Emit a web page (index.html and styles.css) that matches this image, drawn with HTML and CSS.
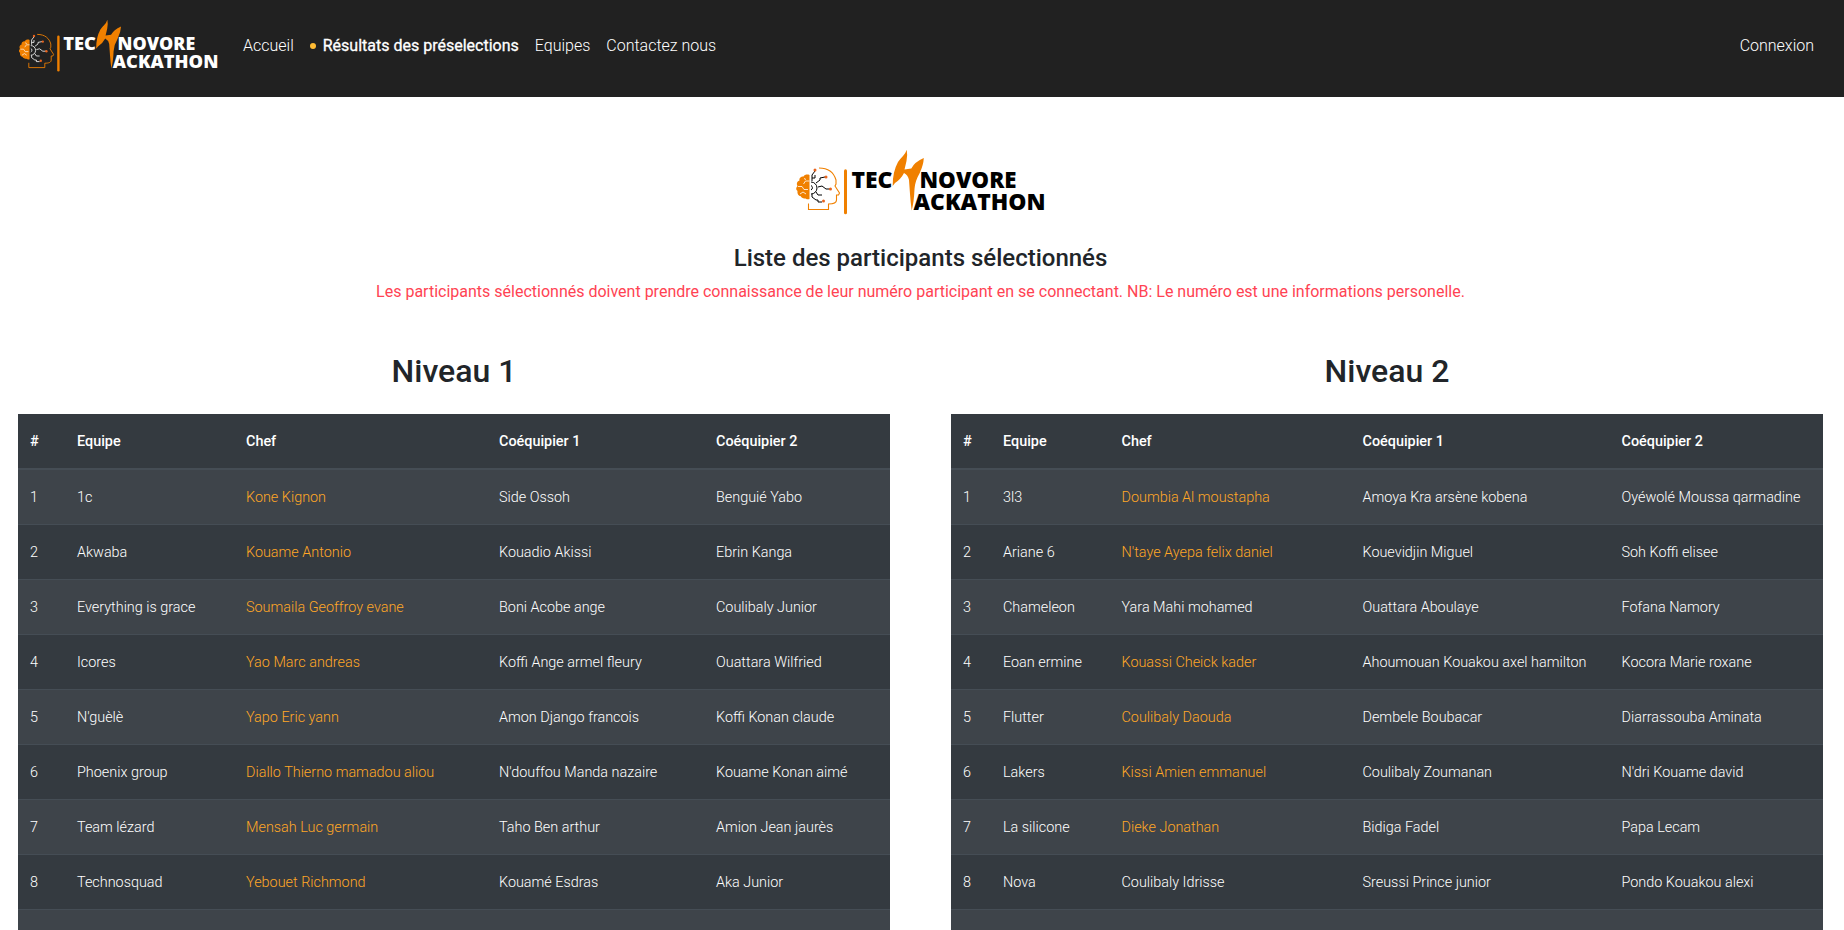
FILE: index.html
```html
<!DOCTYPE html>
<html lang="fr">
<head>
<meta charset="utf-8">
<title>Technovore Hackathon</title>
<link rel="stylesheet" href="styles.css">
</head>
<body>
<svg class="defs" width="0" height="0" aria-hidden="true">
  <symbol id="logo" viewBox="0 0 280 85" overflow="visible">
    <path class="brain" d="M29.500 35c-2-1-5-.5-6 1.500-3 0-4.500 2-4 4-3 1-3 4-2 5.500-2 2-1.500 4 0 5-.5 3 1.500 5 3 5 1 2 3 2.500 5 2.500 1.500 1 3 1 4 .5z"/>
    <path class="folds" d="M29.500 41h-4l-2 3M18 46.500h4l2 3h4M20 54l3-2 3 2M24 38.500l2 1"/>
    <path class="circuit" d="M31 42a6 6 0 0 1 0 12M31 45.500a2.500 2.500 0 0 1 0 4.500M32 41v-6l3-4M36 43l4-3v-2l5-1M38 47l4-1 4 3h4M36 52l2 3h4M32 54v3l4 3h2v2h4M32 38h3v-3"/>
    <path class="face" d="M39 28c10 0 15 5 17 12v4l-1 2 4.500 7-1 2h-2v5c0 3-3 4-8 4v5.500H28.500v-6"/>
    <circle class="node" cx="35" cy="30" r="1.500"/><circle class="node" cx="46" cy="37" r="1.500"/><circle class="node" cx="50.500" cy="49" r="1.500"/><circle class="node" cx="43.500" cy="61" r="1.500"/>
    <rect class="mark" x="64" y="29.300" width="3" height="45" rx="1.500"/>
    <text class="word" x="71.500" y="47.500" textLength="41" lengthAdjust="spacingAndGlyphs">TEC</text>
    <text class="word" x="139.500" y="47.500" textLength="97" lengthAdjust="spacingAndGlyphs">NOVORE</text>
    <text class="word" x="133.500" y="69.800" textLength="132" lengthAdjust="spacingAndGlyphs">ACKATHON</text>
    <path class="mark" d="M126.700 9.700Q127.800 15 126.500 21L124.500 29.500 131.300 28.500Q134.500 22 143.800 18Q143.500 25 139.500 33.500Q135 41 134.500 49Q134 62 131.700 70.500Q130.500 62 130 54L129 40Q128 35 124 33Q121 39 115 43L112.700 46Q112.500 32 118 22Q120.500 18.500 123 16Q125.500 13.500 126.700 9.700z"/>
  </symbol>
</svg>
<nav class="navbar">
  <svg class="nav-logo"><use href="#logo"/></svg>
  <ul class="menu">
    <li>Accueil</li><li class="active">Résultats des préselections</li><li>Equipes</li><li>Contactez nous</li>
  </ul>
  <a class="login">Connexion</a>
</nav>
<main>
  <header class="intro">
    <svg class="hero-logo"><use href="#logo"/></svg>
    <h4>Liste des participants sélectionnés</h4>
    <p>Les participants sélectionnés doivent prendre connaissance de leur numéro participant en se connectant. NB: Le numéro est une informations personelle.</p>
  </header>
  <div class="levels">
    <section>
      <h2>Niveau 1</h2>
      <table class="level-one">
        <colgroup><col class="num"><col class="team"><col class="lead"><col class="mate"><col></colgroup>
        <thead><tr><th>#</th><th>Equipe</th><th>Chef</th><th>Coéquipier 1</th><th>Coéquipier 2</th></tr></thead>
        <tbody>
          <tr><td>1</td><td>1c</td><td class="sel">Kone Kignon</td><td>Side Ossoh</td><td>Benguié Yabo</td></tr>
          <tr><td>2</td><td>Akwaba</td><td class="sel">Kouame Antonio</td><td>Kouadio Akissi</td><td>Ebrin Kanga</td></tr>
          <tr><td>3</td><td>Everything is grace</td><td class="sel">Soumaila Geoffroy evane</td><td>Boni Acobe ange</td><td>Coulibaly Junior</td></tr>
          <tr><td>4</td><td>Icores</td><td class="sel">Yao Marc andreas</td><td>Koffi Ange armel fleury</td><td>Ouattara Wilfried</td></tr>
          <tr><td>5</td><td>N'guèlè</td><td class="sel">Yapo Eric yann</td><td>Amon Django francois</td><td>Koffi Konan claude</td></tr>
          <tr><td>6</td><td>Phoenix group</td><td class="sel">Diallo Thierno mamadou aliou</td><td>N'douffou Manda nazaire</td><td>Kouame Konan aimé</td></tr>
          <tr><td>7</td><td>Team lézard</td><td class="sel">Mensah Luc germain</td><td>Taho Ben arthur</td><td>Amion Jean jaurès</td></tr>
          <tr><td>8</td><td>Technosquad</td><td class="sel">Yebouet Richmond</td><td>Kouamé Esdras</td><td>Aka Junior</td></tr>
          <tr><td></td><td></td><td></td><td></td><td></td></tr>
        </tbody>
      </table>
    </section>
    <section>
      <h2>Niveau 2</h2>
      <table class="level-two">
        <colgroup><col class="num"><col class="team"><col class="lead"><col class="mate"><col></colgroup>
        <thead><tr><th>#</th><th>Equipe</th><th>Chef</th><th>Coéquipier 1</th><th>Coéquipier 2</th></tr></thead>
        <tbody>
          <tr><td>1</td><td>3l3</td><td class="sel">Doumbia Al moustapha</td><td>Amoya Kra arsène kobena</td><td>Oyéwolé Moussa qarmadine</td></tr>
          <tr><td>2</td><td>Ariane 6</td><td class="sel">N'taye Ayepa felix daniel</td><td>Kouevidjin Miguel</td><td>Soh Koffi elisee</td></tr>
          <tr><td>3</td><td>Chameleon</td><td>Yara Mahi mohamed</td><td>Ouattara Aboulaye</td><td>Fofana Namory</td></tr>
          <tr><td>4</td><td>Eoan ermine</td><td class="sel">Kouassi Cheick kader</td><td>Ahoumouan Kouakou axel hamilton</td><td>Kocora Marie roxane</td></tr>
          <tr><td>5</td><td>Flutter</td><td class="sel">Coulibaly Daouda</td><td>Dembele Boubacar</td><td>Diarrassouba Aminata</td></tr>
          <tr><td>6</td><td>Lakers</td><td class="sel">Kissi Amien emmanuel</td><td>Coulibaly Zoumanan</td><td>N'dri Kouame david</td></tr>
          <tr><td>7</td><td>La silicone</td><td class="sel">Dieke Jonathan</td><td>Bidiga Fadel</td><td>Papa Lecam</td></tr>
          <tr><td>8</td><td>Nova</td><td>Coulibaly Idrisse</td><td>Sreussi Prince junior</td><td>Pondo Kouakou alexi</td></tr>
          <tr><td></td><td></td><td></td><td></td><td></td></tr>
        </tbody>
      </table>
    </section>
  </div>
</main>
</body>
</html>
```

FILE: styles.css
```css
* { box-sizing: border-box; }
html, body { height: 100%; }
body { margin: 0; overflow: hidden; background: #fff; color: #212529; font: 300 16px/24px Roboto, sans-serif; }
h2, h4, p, ul { margin: 0; }
.defs { display: block; height: 0; }
.brain, .mark { fill: #f08000; }
.folds { fill: none; stroke: #fff; stroke-width: .8; }
.circuit { fill: none; stroke: currentColor; stroke-width: 1; }
.face { fill: none; stroke: #f08000; stroke-width: 1.1; }
.node { fill: #e8641e; }
.word { fill: currentColor; font: 800 22px "Open Sans", sans-serif; }
.navbar { display: flex; align-items: flex-start; height: 97px; padding: 12px 30px 0 6px; background: #212121; color: #fff; }
.nav-logo { width: 224px; height: 68px; flex: none; overflow: visible; }
.menu { display: flex; flex: 1; gap: 16px; padding: 22px 0 0 13px; list-style: none; }
.active { font-weight: 400; -webkit-text-stroke: .3px #fff; }
.active::before { content: ""; display: inline-block; width: 6px; height: 6px; margin-right: 7px; border-radius: 50%; background: #ffbb33; vertical-align: 2px; }
.login { padding-top: 22px; }
.intro { display: flex; flex-direction: column; align-items: center; padding: 43px 3px 0 0; text-align: center; }
.hero-logo { width: 280px; height: 85px; margin-left: -2px; color: #000; overflow: visible; }
.intro h4 { margin: 19px 0 7px; font: 500 24px/29px Roboto, sans-serif; }
.intro p { color: #ff4353; font-weight: 400; }
.levels { display: flex; justify-content: space-between; padding: 46px 21px 0 18px; }
.levels section { width: 872px; }
.levels h2 { height: 64px; text-align: center; font: 500 32px/42px Roboto, sans-serif; }
table { width: 872px; table-layout: fixed; border-collapse: separate; border-spacing: 0; background: #343a40; color: #fff; }
th, td { padding: 2px 0 0 12px; text-align: left; white-space: nowrap; font-size: 14.4px; }
th { height: 56px; border-bottom: 2px solid #454d55; font-weight: 500; }
td { height: 55px; border-top: 1px solid #454d55; font-weight: 300; }
tbody tr:first-child td { height: 54px; border-top: 0; }
tbody tr:nth-child(odd) { background: #3e444a; }
.sel { color: #ffa726; }
.level-one .num { width: 47px; }
.level-one .team { width: 169px; }
.level-one .lead { width: 253px; }
.level-one .mate { width: 217px; }
.level-two .num { width: 40px; }
.level-two .team { width: 118.500px; }
.level-two .lead { width: 241px; }
.level-two .mate { width: 259px; }
```
